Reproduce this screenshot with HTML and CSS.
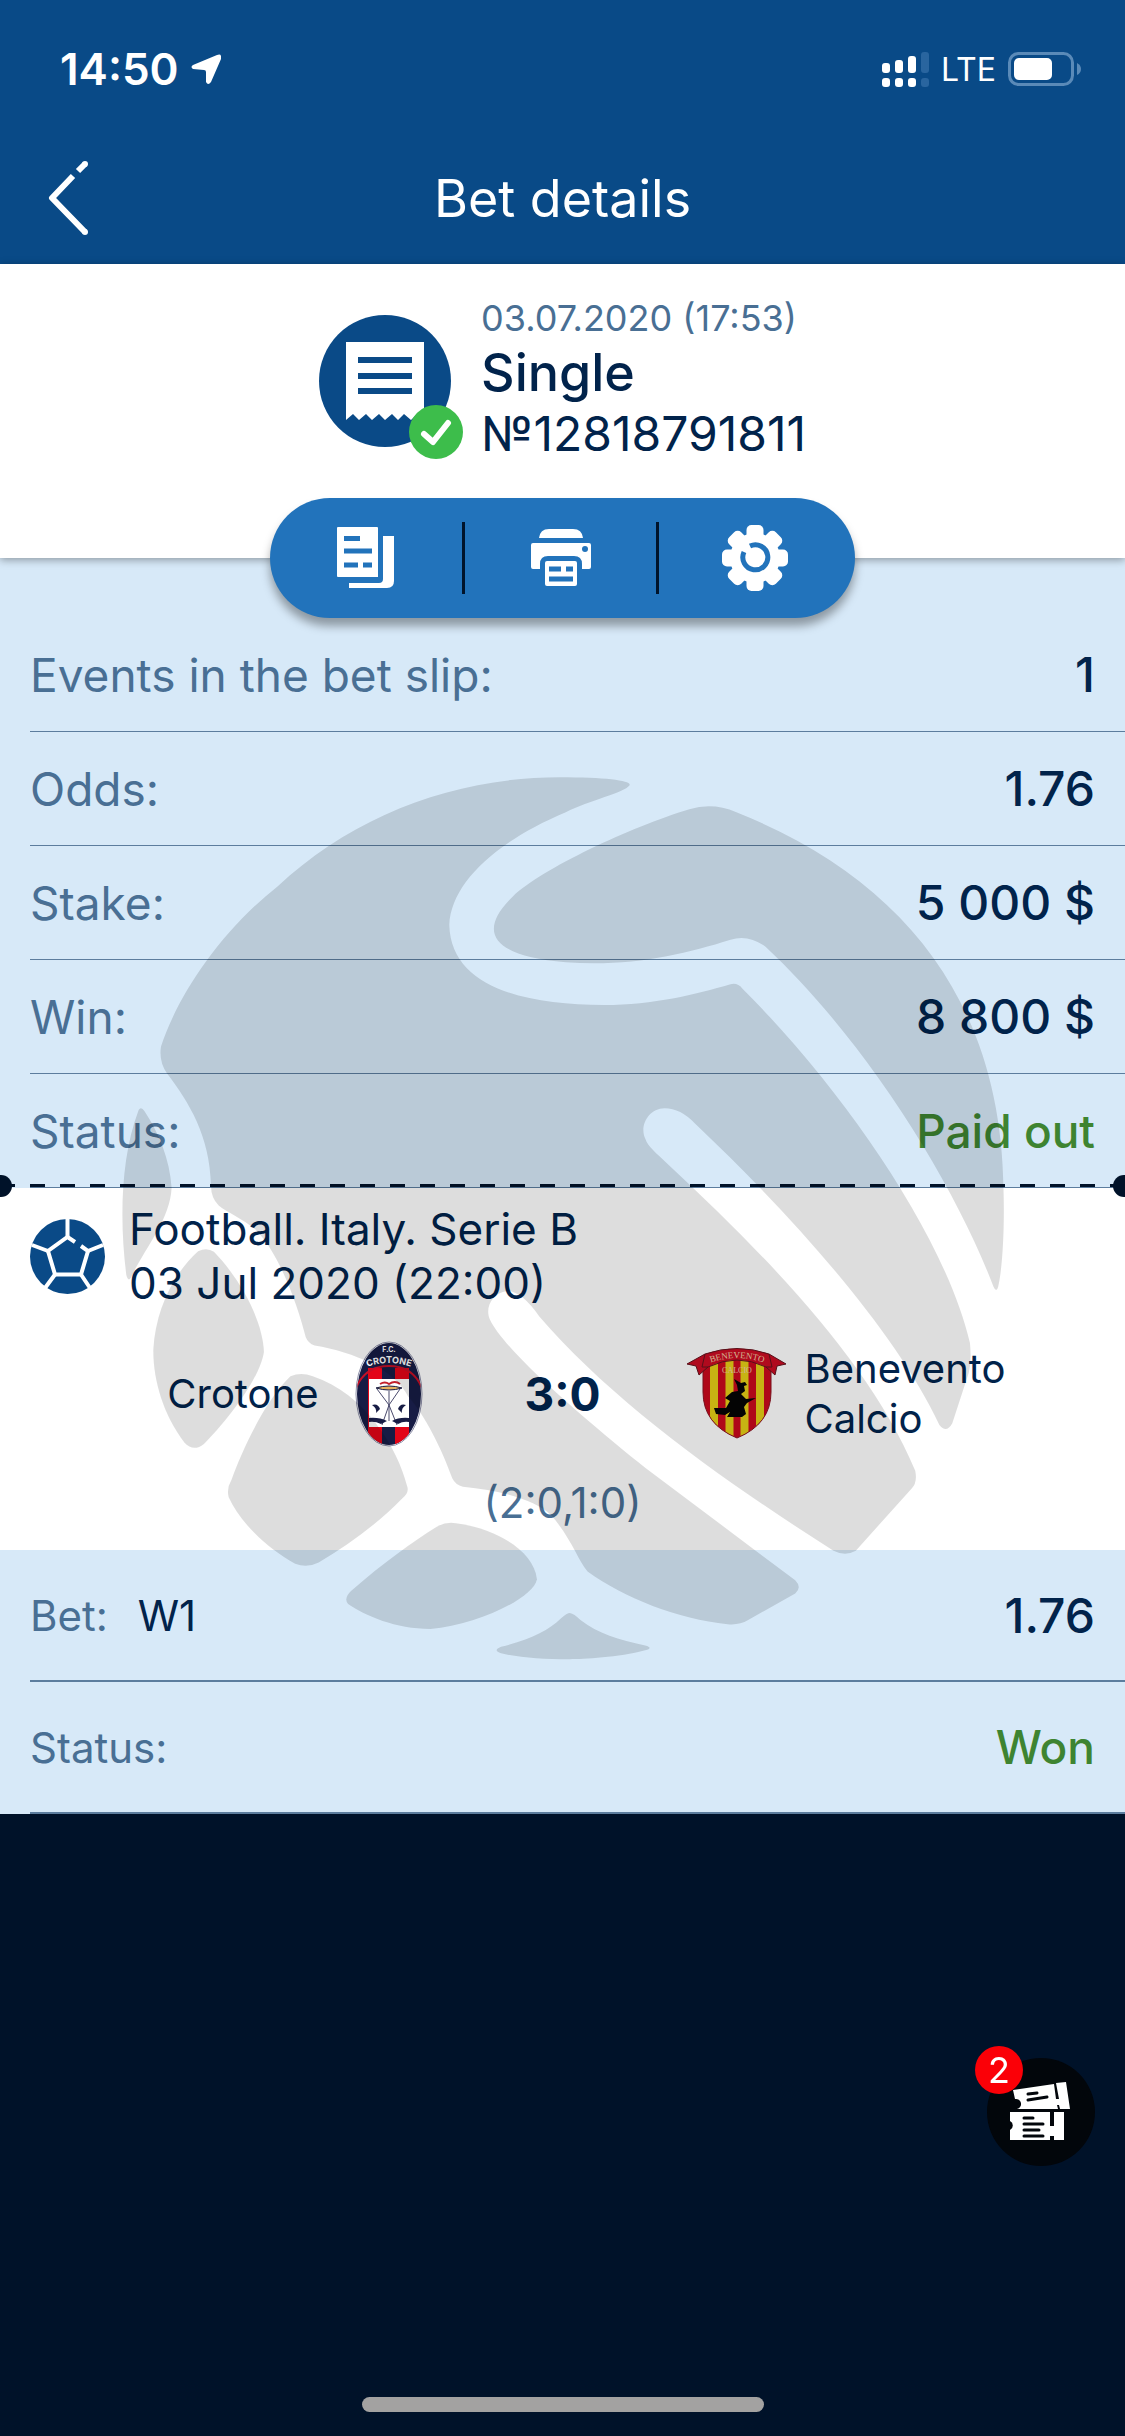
FILE: index.html
```
<!DOCTYPE html>
<html lang="en">
<head>
    <meta charset="UTF-8">
    <meta name="viewport" content="width=device-width, initial-scale=1.0">
    <title>Bet details</title>
    <link rel="stylesheet" href="styles.css">
</head>
<body>
    <header class="header">
        <div class="status-bar">
            <div class="status-left">
                <span class="time">14:50</span>
                <svg class="location-icon" width="30" height="31" viewBox="0 0 30 31">
                    <path d="M26 1 L2 11 Q-1 13 2 15 L13 16 Q15 16 15 18 L15 28 Q17 32 20 28 L30 5 Q31 -1 26 1 Z" fill="#fff"/>
                </svg>
            </div>
            <div class="status-right">
                <svg width="47" height="35" viewBox="0 0 47 35" fill="#fff">
                    <rect x="0" y="11" width="8" height="10" rx="3"/>
                    <rect x="13" y="8" width="8" height="13" rx="3"/>
                    <rect x="26" y="4" width="8" height="17" rx="3"/>
                    <rect x="0" y="26" width="8" height="9" rx="3"/>
                    <rect x="13" y="26" width="8" height="9" rx="3"/>
                    <rect x="26" y="26" width="8" height="9" rx="3"/>
                    <g fill="#29659f">
                        <rect x="39" y="0" width="8" height="21" rx="3"/>
                        <rect x="39" y="26" width="8" height="9" rx="3"/>
                    </g>
                </svg>
                <span class="network">LTE</span>
                <svg width="74" height="34" viewBox="0 0 74 34">
                    <rect x="1.5" y="1.5" width="63" height="31" rx="9" fill="none" stroke="#5a8ab8" stroke-width="3"/>
                    <rect x="6" y="6" width="38" height="22" rx="5" fill="#fff"/>
                    <path d="M69 11 Q73 13 73 17 Q73 21 69 23 Z" fill="#5a8ab8"/>
                </svg>
            </div>
        </div>
        <div class="title-bar">
            <button class="back-btn" aria-label="Back">
                <svg width="42" height="76" viewBox="0 0 42 76" fill="none" stroke="#fff" stroke-width="6">
                    <path d="M30 11 L37 4"/>
                    <path d="M25 16 L4 38 L37 72" stroke-linejoin="round"/>
                    <g fill="#fff" stroke="none">
                        <circle cx="37" cy="4" r="3"/>
                        <circle cx="37" cy="72" r="3"/>
                    </g>
                </svg>
            </button>
            <h1>Bet details</h1>
        </div>
    </header>

    <main class="slip">
        <section class="summary">
            <div class="slip-icon">
                <svg width="132" height="132" viewBox="0 0 132 132">
                    <circle cx="66" cy="66" r="66" fill="#0a4a87"/>
                    <path d="M27 27 H105 V105 L98 99 L92 105 L85 99 L79 105 L73 99 L66 105 L60 99 L53 105 L47 99 L40 105 L34 99 L27 105 Z" fill="#fff"/>
                    <path d="M39 45 H93 M39 61 H93 M39 76 H93" stroke="#0a4a87" stroke-width="6"/>
                </svg>
                <svg class="slip-check" width="54" height="54" viewBox="0 0 54 54">
                    <circle cx="27" cy="27" r="27" fill="#3dbd4b"/>
                    <path d="M15 29 L24 37 L39 18" fill="none" stroke="#fff" stroke-width="6" stroke-linecap="round" stroke-linejoin="round"/>
                </svg>
            </div>
            <div class="slip-info">
                <p class="slip-date">03.07.2020 (17:53)</p>
                <p class="slip-type">Single</p>
                <p class="slip-number">№12818791811</p>
            </div>
        </section>

        <div class="toolbar">
            <button aria-label="Copy">
                <svg width="58" height="62" viewBox="0 0 58 62">
                    <path d="M1 0 H40 Q41 0 41 1 V50 H1 Q0 50 0 49 V1 Q0 0 1 0 Z" fill="#fff"/>
                    <path d="M46 9 H57 V54 Q57 61 50 61 H12 V56 H42 Q46 56 46 52 Z" fill="#fff"/>
                    <path d="M7 11.5 H23 M7 24 H35 M7 38 H21 M26 38 H35" stroke="#2273bb" stroke-width="5"/>
                </svg>
            </button>
            <button aria-label="Print">
                <svg width="60" height="58" viewBox="0 0 60 58">
                    <path d="M8 9 Q9 0 18 0 H42 Q51 0 52 9 Z" fill="#fff"/>
                    <path d="M2 14 H58 Q60 14 60 16 V38 Q60 40 58 40 H51 V35 Q51 27 43 27 H17 Q9 27 9 35 V40 H2 Q0 40 0 38 V16 Q0 14 2 14 Z" fill="#fff"/>
                    <circle cx="54" cy="20" r="3" fill="#2273bb"/>
                    <rect x="14" y="32" width="32" height="25" rx="2" fill="#fff"/>
                    <path d="M18 40 H30 M35 40 H42 M18 50 H42" stroke="#2273bb" stroke-width="5"/>
                </svg>
            </button>
            <button aria-label="Settings">
                <svg width="66" height="66" viewBox="-33 -33 66 66">
                    <g fill="#fff">
                        <circle r="25"/>
                        <rect x="-8.500" y="-33" width="17" height="66" rx="5"/>
                        <rect x="-8.500" y="-33" width="17" height="66" rx="5" transform="rotate(45)"/>
                        <rect x="-8.500" y="-33" width="17" height="66" rx="5" transform="rotate(90)"/>
                        <rect x="-8.500" y="-33" width="17" height="66" rx="5" transform="rotate(135)"/>
                    </g>
                    <path d="M-11 -6 A12.500 12.500 0 1 0 -5 -12" fill="none" stroke="#2273bb" stroke-width="5"/>
                    <path d="M-8 -9 L-2 -3" stroke="#fff" stroke-width="4"/>
                </svg>
            </button>
        </div>

        <dl class="details">
            <div class="row"><dt>Events in the bet slip:</dt><dd>1</dd></div>
            <div class="row"><dt>Odds:</dt><dd>1.76</dd></div>
            <div class="row"><dt>Stake:</dt><dd>5 000 $</dd></div>
            <div class="row"><dt>Win:</dt><dd>8 800 $</dd></div>
            <div class="row"><dt>Status:</dt><dd class="success">Paid out</dd></div>
        </dl>

        <section class="event">
            <div class="perforation"></div>
            <div class="event-head">
                <svg width="75" height="75" viewBox="0 0 75 75">
                    <circle cx="37.500" cy="37.500" r="37.500" fill="#0a4a87"/>
                    <g fill="none" stroke="#fff" stroke-width="4">
                        <path d="M45 23 L37.500 18 L18 32 L25 55.500 H51 L58 32 L51 27"/>
                        <path d="M37.500 0 V18 M2 26 L18 32 M73 26 L58 32 M25 55.500 L15 69 M51 55.500 L60 69"/>
                    </g>
                </svg>
                <p>Football. Italy. Serie B<br>03 Jul 2020 (22:00)</p>
            </div>
            <div class="match">
                <div class="team home">
                    <span>Crotone</span>
                    <svg width="68" height="106" viewBox="0 0 68 106">
                        <clipPath id="oval"><ellipse cx="34" cy="53" rx="32" ry="51"/></clipPath>
                        <ellipse cx="34" cy="53" rx="33" ry="52" fill="#fff" stroke="#8d8fa8"/>
                        <g clip-path="url(#oval)">
                            <path d="M0 0 H68 V106 H0 Z" fill="#171c45"/>
                            <path d="M13 27 H27 V106 H13 Z M40 27 H54 V106 H40 Z" fill="#e30518"/>
                            <path d="M1 47 Q10 25 34 25 Q58 25 67 47" fill="none" stroke="#c40f26" stroke-width="2"/>
                        </g>
                        <rect x="14" y="38" width="40" height="48" fill="#fff"/>
                        <path d="M22 48 L34 64 L45 48 M34 64 L27 84 M34 64 L42 84 M34 50 V80" fill="none" stroke="#4a4a6d"/>
                        <path d="M21 47 Q34 43 47 47 Q34 51 21 47 Z" fill="#e8b060" stroke="#171c45"/>
                        <path d="M25 43 Q30 40 34 43 Q40 39 45 43" fill="none" stroke="#c3202c" stroke-width="2"/>
                        <path d="M17 64 Q23 62 25 68 L21 72 Q22 67 17 64 Z M51 64 Q45 62 43 68 L47 72 Q46 67 51 64 Z M14 77 Q24 76 32 80 L26 83 Q20 80 14 81 Z M54 77 Q44 76 37 80 L43 83 Q48 80 54 81 Z" fill="#171c45"/>
                        <path id="arc-home" d="M9 27 Q34 17 59 27" fill="none"/>
                        <text class="crest-text" x="34" y="11" font-size="7" text-anchor="middle">F.C.</text>
                        <text class="crest-text" font-size="9"><textPath href="#arc-home" startOffset="50%" text-anchor="middle">CROTONE</textPath></text>
                    </svg>
                </div>
                <strong class="score">3:0</strong>
                <div class="team">
                    <svg width="100" height="92" viewBox="0 0 100 92">
                        <clipPath id="shield"><path d="M16 12 H84 V44 Q84 76 50 90 Q16 76 16 44 Z"/></clipPath>
                        <g clip-path="url(#shield)">
                            <path d="M0 0 H100 V92 H0 Z" fill="#ca0a1d"/>
                            <path d="M27 0 V92 M42.500 0 V92 M57.500 0 V92 M73 0 V92" stroke="#e6cf17" stroke-width="8"/>
                        </g>
                        <path d="M16 22 V44 Q16 76 50 90 Q84 76 84 44 V22" fill="none" stroke="#8b1322"/>
                        <path d="M0 16 L18 6 Q50 -5 82 6 L99 16 L90 18 L88 27 L79 19 Q50 5 21 19 L12 27 L9 18 Z" fill="#cb0c23" stroke="#65131d"/>
                        <path d="M18 6 L15 19 L21 19 M82 6 L85 19 L79 19" fill="none" stroke="#65131d"/>
                        <path d="M47 31 L54 35 L58 34 L60 37 L57 38 L58 43 L54 46 L59 51 L69 50 L60 55 L57 59 L59 66 L55 69 H40 L43 64 L38 67 L29 66 L27 60 L39 60 L43 53 L38 50 L45 44 L51 43 L50 37 Z" fill="#050505"/>
                        <path id="arc-away" d="M20 16 Q50 4 80 16" fill="none"/>
                        <text class="banner-text" font-size="9"><textPath href="#arc-away" startOffset="50%" text-anchor="middle">BENEVENTO</textPath></text>
                        <text class="banner-text" x="50" y="25" font-size="8" text-anchor="middle">CALCIO</text>
                    </svg>
                    <span>Benevento Calcio</span>
                </div>
            </div>
            <p class="periods">(2:0,1:0)</p>
        </section>

        <dl class="bets">
            <div class="row"><dt>Bet: <span class="pick">W1</span></dt><dd>1.76</dd></div>
            <div class="row"><dt>Status:</dt><dd class="success">Won</dd></div>
        </dl>

        <svg class="watermark" viewBox="0 0 1568 1568" preserveAspectRatio="none">
            <path d="M780 46 C860 46 905 52 898 60 C890 72 830 85 790 105 C670 155 595 225 592 295 C595 400 720 430 855 430 C940 430 1010 412 1070 395 Q1082 392 1090 402 C1260 570 1435 820 1477 1000 Q1480 1030 1475 1050 L1447 1135 Q1437 1153 1425 1138 C1350 980 1180 790 1010 630 Q985 604 958 604 C930 604 915 635 925 655 C930 670 945 680 960 695 C1150 870 1310 1040 1384 1215 Q1388 1235 1378 1245 L1283 1350 Q1265 1360 1245 1350 C1070 1240 870 1100 745 955 Q715 912 690 912 C665 915 652 940 661 960 C690 1020 850 1150 925 1210 L1180 1400 Q1192 1412 1180 1422 L1100 1467 Q1085 1476 1065 1474 C980 1465 890 1430 827 1385 C810 1365 800 1330 765 1290 C740 1265 680 1248 615 1242 Q603 1240 597 1228 C580 1180 550 1120 522 1090 C500 1045 430 1015 363 1004 Q352 1000 348 990 C335 940 305 850 262 808 C240 790 215 780 200 768 Q187 755 187 735 C185 650 150 595 112 545 Q98 525 102 500 C128 420 198 310 300 230 C430 110 600 46 780 46 Z"/>
            <path d="M1000 100 Q1040 88 1080 105 C1370 220 1530 430 1534 740 C1536 800 1533 870 1525 905 Q1522 916 1517 905 C1450 730 1300 490 1130 332 Q1100 310 1070 320 C990 345 900 366 790 358 C670 348 635 310 700 247 C750 200 900 130 1000 100 Z"/>
            <path d="M64 607 Q68 600 74 609 C98 645 117 690 120 738 C118 790 75 840 53 885 Q47 900 43 885 C32 800 32 690 64 607 Z"/>
            <path d="M165 845 Q180 838 192 846 C235 890 275 960 277 1015 C270 1060 215 1130 175 1170 Q157 1184 142 1168 C105 1120 88 1060 89 1010 C92 950 120 885 165 845 Z"/>
            <path d="M322 1056 Q340 1048 360 1056 C450 1085 505 1180 520 1240 Q525 1252 512 1262 C470 1305 420 1340 370 1370 Q350 1380 330 1372 C280 1345 235 1300 217 1260 Q213 1245 222 1230 C240 1180 280 1095 322 1056 Z"/>
            <path d="M595 1303 C660 1308 735 1345 741 1398 C735 1430 640 1475 560 1482 C500 1482 450 1460 420 1440 Q412 1430 425 1418 C480 1370 530 1335 570 1310 Q582 1303 595 1303 Z"/>
            <path d="M797 1455 Q804 1456 815 1467 C845 1490 880 1500 925 1510 Q940 1514 925 1518 C880 1530 820 1533 797 1533 C750 1533 710 1530 680 1523 Q665 1518 680 1512 C730 1500 760 1485 782 1464 Q792 1455 797 1455 Z"/>
        </svg>
    </main>

    <button class="tickets-btn" aria-label="Tickets">
        <svg width="62" height="60" viewBox="0 0 62 60">
            <path d="M3 8 L44 2 L46 17 L49 17 L46 1 L56 0 L60 27 L50 27 L49 23 L47 23 L48 27 H7 A5 5 0 0 0 5 17 Z" fill="#fff"/>
            <path d="M0 30 H40 V44 H44 V30 H54 V58 H44 V54 H40 V58 H0 V48 A5 5 0 0 0 0 39 Z" fill="#fff"/>
            <path d="M18 12 L27 11 M18 18 L37 15 M14 36 H23 M14 42 H33 M14 48 H29 M14 54 H33" stroke="#02060b" stroke-width="3" stroke-linecap="round"/>
        </svg>
        <span class="badge">2</span>
    </button>
    <div class="home-indicator"></div>
</body>
</html>
```
FILE: styles.css
```
:root {
    --blue: #094a87;
    --pill: #2273bb;
    --light: #d7e9f8;
    --navy: #01234b;
    --muted: #496f94;
    --line: #5c7d9e;
    --green: #3e8431;
    --dark: #001229;
}

* {
    margin: 0;
    padding: 0;
    box-sizing: border-box;
}

body {
    min-height: 100vh;
    background: var(--dark);
    color: var(--navy);
    font-family: Inter, "Liberation Sans", sans-serif;
    font-size: 46px;
}

button {
    border: none;
    background: none;
    color: inherit;
    font: inherit;
    cursor: pointer;
}

svg {
    display: block;
    flex-shrink: 0;
}

.header {
    background: var(--blue);
    color: #fff;
}

.status-bar {
    display: flex;
    justify-content: space-between;
    height: 132px;
    padding: 6px 43px 0 60px;
}

.status-left,
.status-right {
    display: flex;
    align-items: center;
}

.status-left {
    gap: 12px;
}

.status-right {
    gap: 12px;
}

.time {
    font-size: 44px;
    font-weight: 600;
}

.network {
    font-size: 32px;
}

.title-bar {
    display: grid;
    grid-template-columns: 100px 1fr 100px;
    align-items: center;
    height: 132px;
}

.back-btn {
    padding-left: 48px;
}

.title-bar h1 {
    font-size: 52px;
    font-weight: 400;
    text-align: center;
}

.slip {
    position: relative;
    background: var(--light);
}

.summary {
    display: flex;
    justify-content: center;
    gap: 30px;
    height: 294px;
    padding-top: 24px;
    background: #fff;
    box-shadow: 0 2px 8px rgba(0, 0, 0, 0.35);
}

.slip-icon {
    position: relative;
    align-self: flex-start;
    margin-top: 27px;
}

.slip-check {
    position: absolute;
    right: -12px;
    bottom: -12px;
}

.slip-info {
    line-height: 60px;
}

.slip-date {
    color: var(--muted);
    font-size: 36px;
}

.slip-type {
    font-size: 52px;
    font-weight: 500;
    line-height: 50px;
}

.slip-number {
    font-size: 48px;
    line-height: 72px;
}

.toolbar {
    display: flex;
    position: relative;
    width: 52%;
    height: 120px;
    margin: -60px auto 0;
    padding-right: 4px;
    border-radius: 60px;
    background: var(--pill);
    box-shadow: 0 8px 10px rgba(0, 0, 0, 0.35);
}

.toolbar button {
    display: flex;
    flex: 1;
    align-items: center;
    justify-content: center;
    height: 72px;
    margin: 24px 0;
    border-right: 3px solid #00142c;
}

.toolbar button:last-child {
    border-right: none;
}

.row {
    display: flex;
    align-items: center;
    justify-content: space-between;
    height: 114px;
    margin-left: 30px;
    padding-right: 30px;
    border-bottom: 1px solid var(--line);
}

.row dt {
    color: var(--muted);
}

.row dd {
    font-size: 48px;
    font-weight: 500;
}

.row .success {
    color: var(--green);
    font-size: 46px;
}

.event {
    position: relative;
    padding: 14px 30px 22px;
    background: #fff;
}

.perforation {
    position: absolute;
    top: -4px;
    left: 0;
    right: 0;
    height: 3px;
    background: repeating-linear-gradient(90deg, var(--dark) 0 15px, transparent 15px 30px);
}

.perforation::before,
.perforation::after {
    content: "";
    position: absolute;
    top: -9px;
    width: 22px;
    height: 22px;
    border-radius: 50%;
    background: var(--dark);
}

.perforation::before {
    left: -10px;
}

.perforation::after {
    right: -10px;
    clip-path: inset(0 10px 0 0);
}

.event-head {
    display: flex;
    align-items: center;
    gap: 24px;
    font-size: 44px;
    line-height: 54px;
}

.match {
    display: grid;
    grid-template-columns: 1fr 216px 1fr;
    align-items: center;
    height: 152px;
    padding-top: 16px;
    font-size: 40px;
    line-height: 50px;
}

.team {
    display: flex;
    align-items: center;
    gap: 18px;
}

.home {
    justify-content: flex-end;
    gap: 36px;
    padding-right: 32px;
}

.team:last-child {
    padding-left: 16px;
}

.score {
    font-size: 46px;
    font-weight: 700;
    text-align: center;
}

.crest-text {
    fill: #fff;
    font-weight: 700;
}

.banner-text {
    fill: #f3d0a8;
    font-family: "Liberation Serif", serif;
}

.periods {
    padding-top: 16px;
    color: var(--muted);
    font-size: 42px;
    line-height: 50px;
    text-align: center;
}

.bets .row {
    height: 132px;
    border-bottom: 2px solid var(--line);
}

.bets dt {
    font-size: 42px;
}

.pick {
    margin-left: 18px;
    color: var(--navy);
}

.watermark {
    position: absolute;
    top: 486px;
    left: 9%;
    width: 82%;
    height: 930px;
    fill: rgba(0, 0, 0, 0.135);
    pointer-events: none;
}

.tickets-btn {
    position: fixed;
    right: 30px;
    bottom: 270px;
    display: flex;
    align-items: center;
    justify-content: center;
    width: 108px;
    height: 108px;
    border-radius: 50%;
    background: #02060b;
}

.badge {
    position: absolute;
    top: -12px;
    left: -12px;
    width: 48px;
    height: 48px;
    border-radius: 50%;
    background: #fb0007;
    color: #fff;
    font-size: 36px;
    line-height: 48px;
    text-align: center;
}

.home-indicator {
    position: fixed;
    bottom: 24px;
    left: 50%;
    width: 402px;
    height: 15px;
    margin-left: -201px;
    border-radius: 8px;
    background: #a3a2a1;
}
```
